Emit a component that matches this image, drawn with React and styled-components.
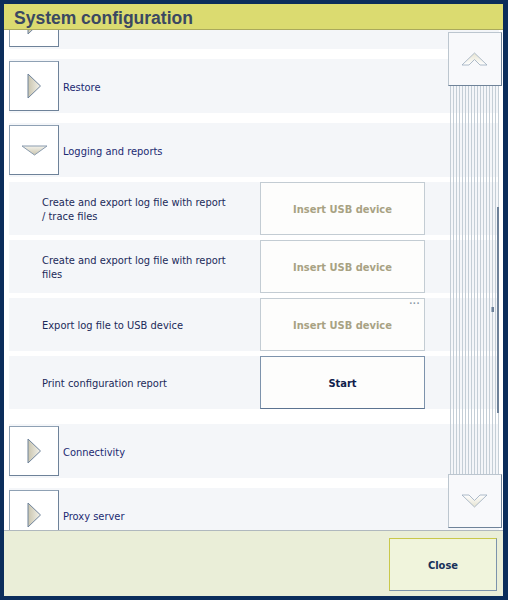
import React from "react";
import styled, { createGlobalStyle } from "styled-components";

const GlobalStyle = createGlobalStyle`
  html, body {
    margin: 0;
    padding: 0;
    background: #0b2d5b;
  }
  * {
    box-sizing: border-box;
  }
`;

const FONT = `"DejaVu Sans Condensed", "Liberation Sans", sans-serif`;

const Window = styled.div`
  width: 508px;
  height: 600px;
  display: flex;
  flex-direction: column;
  border: solid #0b2d5b;
  border-width: 4px 5px 4px 4px;
  background: #ffffff;
  font-family: ${FONT};
`;

const TitleBar = styled.div`
  height: 26px;
  flex: none;
  display: flex;
  align-items: center;
  padding: 3px 0 0 10px;
  background: #dbdb70;
  border-bottom: 1px solid #aaa95c;
  color: #3a4862;
  font-family: "Liberation Sans", sans-serif;
  font-weight: bold;
  font-size: 17.5px;
`;

const Body = styled.div`
  flex: 1;
  position: relative;
  overflow: hidden;
  background: #ffffff;
`;

const List = styled.div`
  display: flex;
  flex-direction: column;
  margin-top: -35px;
  padding: 0 4px 0 5px;
`;

const CategoryRow = styled.div`
  height: 54px;
  flex: none;
  display: flex;
  align-items: center;
  gap: 4px;
  background: #f4f6f9;
  margin-bottom: ${(p) => (p.$open ? "5px" : "10px")};
`;

const Toggle = styled.div`
  width: 50px;
  height: 50px;
  flex: none;
  display: flex;
  align-items: center;
  justify-content: center;
  background: #ffffff;
  border: 1px solid #6e8299;
  border-top-color: #8fa1b4;
  border-left-color: #8fa1b4;
`;

const CategoryLabel = styled.span`
  padding-top: 2px;
  font-size: 11px;
  color: #1b2a72;
`;

const Section = styled.div`
  display: flex;
  flex-direction: column;
  gap: 5px;
  margin-bottom: 15px;
`;

const ItemRow = styled.div`
  height: 53px;
  display: flex;
  align-items: flex-start;
  background: #f4f6f9;
`;

const ItemLabel = styled.div`
  width: 218px;
  align-self: center;
  padding: 2px 0 0 33px;
  font-size: 11px;
  line-height: 14px;
  color: #1b2a5a;
`;

const ActionButton = styled.button`
  position: relative;
  margin-left: 33px;
  width: 165px;
  height: 53px;
  padding: 2px 0 0;
  background: #fdfdfc;
  border: 1px solid ${(p) => (p.$disabled ? "#c3ccd3" : "#7d93ac")};
  border-bottom-color: ${(p) => (p.$disabled ? "#c3ccd3" : "#5c7390")};
  color: ${(p) => (p.$disabled ? "#a8a283" : "#10204a")};
  font-family: ${FONT};
  font-weight: bold;
  font-size: 11px;
`;

const More = styled.span`
  position: absolute;
  top: -2px;
  right: 4px;
  font-size: 9px;
  letter-spacing: 0.5px;
  color: #8c9aa8;
  line-height: 9px;
`;

const Scrollbar = styled.div`
  position: absolute;
  top: 2px;
  right: 1px;
  bottom: 2px;
  width: 54px;
  display: flex;
  flex-direction: column;
`;

const ScrollButton = styled.div`
  height: 54px;
  flex: none;
  display: flex;
  align-items: center;
  justify-content: center;
  background: #f8f9fb;
  border: 1px solid #bcc6cf;
  border-right-color: #6f8399;
  border-bottom-color: #6f8399;
`;

const Track = styled.div`
  position: relative;
  flex: 1;
  margin: 0 3px 0 2px;
  background-image: repeating-linear-gradient(
    to right,
    #c4ced6 0px,
    #c4ced6 1px,
    transparent 1px,
    transparent 3px
  );
`;

const Thumb = styled.div`
  position: absolute;
  right: 0;
  top: 121px;
  height: 206px;
  width: 2px;
  background: #6d8199;
`;

const Grip = styled.div`
  position: absolute;
  right: 5px;
  top: 221px;
  width: 3px;
  height: 5px;
  background: #6d8199;
  border-left: 1px solid #a8b8c8;
`;

const Footer = styled.div`
  height: 66px;
  flex: none;
  display: flex;
  justify-content: flex-end;
  align-items: flex-start;
  padding: 7px 6px 0 0;
  background: #eaeed8;
  border-top: 1px solid #b0b8be;
`;

const CloseButton = styled.button`
  width: 108px;
  height: 53px;
  padding-top: 2px;
  background: #f0f4dc;
  border: 1px solid #c9c84a;
  border-right-color: #7c93ab;
  border-bottom-color: #7c93ab;
  color: #17305a;
  font-family: ${FONT};
  font-weight: bold;
  font-size: 11px;
`;

const ArrowRight = () => (
  <svg width="15" height="26" viewBox="0 0 15 26">
    <defs>
      <linearGradient id="gr" x1="0" y1="0" x2="1" y2="0">
        <stop offset="0" stopColor="#c9c4ae" />
        <stop offset="1" stopColor="#f4f3ec" />
      </linearGradient>
    </defs>
    <polygon points="1,1 13.5,13 1,25" fill="url(#gr)" stroke="#6f839b" strokeWidth="1" />
  </svg>
);

const ArrowDown = () => (
  <svg width="27" height="11" viewBox="0 0 27 11">
    <defs>
      <linearGradient id="gd" x1="0" y1="0" x2="0" y2="1">
        <stop offset="0" stopColor="#f4f3ec" />
        <stop offset="1" stopColor="#c9c4ae" />
      </linearGradient>
    </defs>
    <polygon points="1,1 26,1 13.5,10" fill="url(#gd)" stroke="#8a9bae" strokeWidth="1" />
  </svg>
);

const Chevron = ({ down }) => (
  <svg width="28" height="14" viewBox="0 0 28 14" style={down ? { transform: "scaleY(-1)" } : undefined}>
    <defs>
      <linearGradient id={down ? "cd" : "cu"} x1="0" y1="0" x2="0" y2="1">
        <stop offset="0" stopColor="#e6e4d2" />
        <stop offset="1" stopColor="#ffffff" />
      </linearGradient>
    </defs>
    <polygon
      points="1,13 13.5,1 26,13 19,13 13.5,7.5 8,13"
      fill={`url(#${down ? "cd" : "cu"})`}
      stroke="#9aabbd"
      strokeWidth="0.8"
    />
  </svg>
);

const categoriesTop = ["", "Restore"];
const categoriesBottom = ["Connectivity", "Proxy server"];

const items = [
  { label: "Create and export log file with report / trace files", action: "Insert USB device", disabled: true },
  { label: "Create and export log file with report files", action: "Insert USB device", disabled: true },
  { label: "Export log file to USB device", action: "Insert USB device", disabled: true, more: true },
  { label: "Print configuration report", action: "Start" },
];

const Category = ({ label }) => (
  <CategoryRow>
    <Toggle>
      <ArrowRight />
    </Toggle>
    <CategoryLabel>{label}</CategoryLabel>
  </CategoryRow>
);

export default function App() {
  return (
    <>
      <GlobalStyle />
      <Window>
        <TitleBar>System configuration</TitleBar>
        <Body>
          <List>
            {categoriesTop.map((c) => (
              <Category key={c || "top"} label={c} />
            ))}
            <CategoryRow $open>
              <Toggle>
                <ArrowDown />
              </Toggle>
              <CategoryLabel>Logging and reports</CategoryLabel>
            </CategoryRow>
            <Section>
              {items.map((it) => (
                <ItemRow key={it.label}>
                  <ItemLabel>{it.label}</ItemLabel>
                  <ActionButton $disabled={it.disabled}>
                    {it.more && <More>...</More>}
                    {it.action}
                  </ActionButton>
                </ItemRow>
              ))}
            </Section>
            {categoriesBottom.map((c) => (
              <Category key={c} label={c} />
            ))}
          </List>
          <Scrollbar>
            <ScrollButton>
              <Chevron />
            </ScrollButton>
            <Track>
              <Thumb />
              <Grip />
            </Track>
            <ScrollButton>
              <Chevron down />
            </ScrollButton>
          </Scrollbar>
        </Body>
        <Footer>
          <CloseButton>Close</CloseButton>
        </Footer>
      </Window>
    </>
  );
}
